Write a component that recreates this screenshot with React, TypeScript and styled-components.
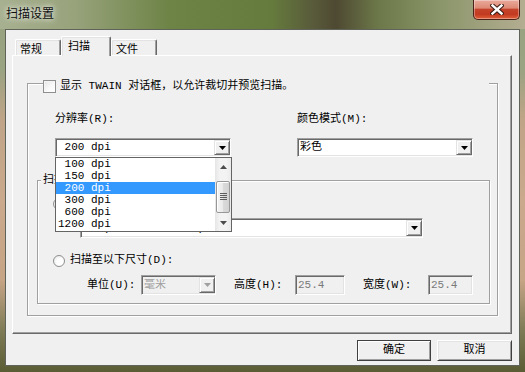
import React from "react";
import styled, { createGlobalStyle } from "styled-components";

const GlobalStyle = createGlobalStyle`
  html, body {
    margin: 0;
    padding: 0;
  }
  body {
    width: 525px;
    height: 372px;
    overflow: hidden;
    font-family: "Liberation Mono", "Noto Sans CJK SC", monospace;
    font-size: 11px;
    color: #000;
  }
  * {
    box-sizing: border-box;
  }
`;

// non-breaking space keeps the 3-digit values lined up under "1200"
const NB = "\u00a0";
const RESOLUTIONS = [`${NB}100 dpi`, `${NB}150 dpi`, `${NB}200 dpi`, `${NB}300 dpi`, `${NB}600 dpi`, "1200 dpi"];
const CURRENT = `${NB}200 dpi`;

const Arrow = ({ up, color = "#000" }: { up?: boolean; color?: string }) => (
  <svg width="7" height="4" viewBox="0 0 7 4">
    <path d={up ? "M0 4 L3.5 0 L7 4 Z" : "M0 0 L7 0 L3.5 4 Z"} fill={color} />
  </svg>
);

export default function App() {
  return (
    <>
      <GlobalStyle />
      <Window>
        <TitleBar>
          <Title>扫描设置</Title>
          <CloseButton>
            <svg width="14" height="11" viewBox="0 0 14 11">
              <path d="M2.5 1.5 L11.5 9.5 M11.5 1.5 L2.5 9.5" stroke="#3b1c14" strokeWidth="4.5" strokeLinecap="square" />
              <path d="M2.5 1.5 L11.5 9.5 M11.5 1.5 L2.5 9.5" stroke="#fff" strokeWidth="2.4" strokeLinecap="square" />
            </svg>
          </CloseButton>
        </TitleBar>

        <Client>
          <TabRow>
            <Tab $width={46}>常规</Tab>
            <Tab $width={50} $active>扫描</Tab>
            <Tab $width={46}>文件</Tab>
          </TabRow>

          <Panel>
            <GroupBox $width={471}>
              <Caption $offset={15} $top={-4} $width={446}>
                <CheckBox />
                <span>显示 TWAIN 对话框，以允许裁切并预览扫描。</span>
              </Caption>
              <GroupBody $pad="20px 7px 11px 9px">
                <ColumnsRow>
                  <Column>
                    <Label>分辨率(R):</Label>
                    <Combo $width={176} $height={19}>
                      <ComboText>{CURRENT}</ComboText>
                      <DropButton $size={15}>
                        <Arrow />
                      </DropButton>
                      <DropList>
                        <ListItems>
                          {RESOLUTIONS.map((r) => (
                            <ListItem key={r} $selected={r === CURRENT}>
                              {r}
                            </ListItem>
                          ))}
                        </ListItems>
                        <ScrollBar>
                          <ArrowCell>
                            <Arrow up color="#4d4d4d" />
                          </ArrowCell>
                          <Track>
                            <Thumb>
                              <svg width="7" height="8" viewBox="0 0 7 8">
                                {[0, 2, 4, 6].map((y) => (
                                  <rect key={y} x="0" y={y} width="7" height="1" fill="#5c5c5c" />
                                ))}
                              </svg>
                            </Thumb>
                          </Track>
                          <ArrowCell>
                            <Arrow color="#4d4d4d" />
                          </ArrowCell>
                        </ScrollBar>
                      </DropList>
                    </Combo>
                  </Column>
                  <Column>
                    <Label>颜色模式(M):</Label>
                    <Combo $width={176} $height={19}>
                      <ComboText>彩色</ComboText>
                      <DropButton $size={15}>
                        <Arrow />
                      </DropButton>
                    </Combo>
                  </Column>
                </ColumnsRow>

                <GroupBox $top={23}>
                  <Caption $offset={3} $top={-7}>
                    扫描区域
                  </Caption>
                  <GroupBody $pad="0 0 8px 0">
                    <RadioRow $top={10}>
                      <Radio />
                      <span>扫描至预定义尺寸(S):</span>
                    </RadioRow>
                    <Indent $left={42} $top={8}>
                      <Combo $width={343} $height={20}>
                        <ComboText>A4 (210 x 297 毫米)</ComboText>
                        <DropButton $size={16}>
                          <Arrow />
                        </DropButton>
                      </Combo>
                    </Indent>
                    <RadioRow $top={16}>
                      <Radio />
                      <span>扫描至以下尺寸(D):</span>
                    </RadioRow>
                    <SizeRow>
                      <SizeLabel $width={54}>单位(U):</SizeLabel>
                      <Combo $width={75} $height={20} $disabled>
                        <ComboText>毫米</ComboText>
                        <DropButton $size={16}>
                          <Arrow color="#a0a0a0" />
                        </DropButton>
                      </Combo>
                      <SizeLabel $width={61} $gap={18}>高度(H):</SizeLabel>
                      <Combo $width={50} $height={20} $disabled $muted>
                        <ComboText>25.4</ComboText>
                      </Combo>
                      <SizeLabel $width={65} $gap={18}>宽度(W):</SizeLabel>
                      <Combo $width={45} $height={20} $disabled $muted>
                        <ComboText>25.4</ComboText>
                      </Combo>
                    </SizeRow>
                  </GroupBody>
                </GroupBox>
              </GroupBody>
            </GroupBox>
          </Panel>

          <ButtonRow>
            <Button $width={74} $default>确定</Button>
            <Button $width={75}>取消</Button>
          </ButtonRow>
        </Client>
      </Window>
    </>
  );
}

const Window = styled.div`
  width: 525px;
  height: 372px;
  display: flex;
  flex-direction: column;
  background: linear-gradient(
    to bottom,
    #97a27f 0px,
    #9aa382 70px,
    #c0a487 120px,
    #caa98c 200px,
    #c6a486 280px,
    #7e7b56 330px,
    #5a5c34 372px
  );
`;

const TitleBar = styled.div`
  height: 29px;
  flex: none;
  display: flex;
  align-items: flex-start;
  justify-content: space-between;
  background: linear-gradient(
    to right,
    #a7b090 0%,
    #98a37c 14%,
    #6e8447 32%,
    #657a3d 52%,
    #58593a 60%,
    #4e4932 64%,
    #6c7849 72%,
    #8b966a 84%,
    #b3ad91 100%
  );
`;

const Title = styled.span`
  font-family: "Noto Sans CJK SC", sans-serif;
  font-size: 12px;
  line-height: 14px;
  margin: 6px 0 0 6px;
  color: #101010;
  text-shadow: 0 0 5px rgba(255, 255, 255, 0.9), 0 0 10px rgba(255, 255, 255, 0.6);
`;

const CloseButton = styled.div`
  width: 47px;
  height: 20px;
  margin-right: 5px;
  border: 1px solid #4a2218;
  border-top: none;
  border-radius: 0 0 5px 5px;
  background: linear-gradient(
    to bottom,
    #e9aa9c 0%,
    #dd8a76 42%,
    #c4432a 50%,
    #c23a20 75%,
    #e0603a 100%
  );
  box-shadow: inset 0 0 0 1px rgba(255, 255, 255, 0.35);
  display: flex;
  align-items: center;
  justify-content: center;
`;

const Client = styled.div`
  margin: 0 5px;
  height: 337px;
  flex: none;
  background: #f0f0f0;
  border: 1px solid #5f6359;
  display: flex;
  flex-direction: column;
  padding: 6px 7px 0 6px;
`;

const TabRow = styled.div`
  display: flex;
  align-items: flex-end;
  height: 19px;
  padding-left: 3px;
  position: relative;
  z-index: 1;
`;

const Tab = styled.div<{ $active?: boolean; $width: number }>`
  width: ${(p) => p.$width}px;
  height: ${(p) => (p.$active ? 20 : 16)}px;
  margin-bottom: ${(p) => (p.$active ? -1 : 0)}px;
  padding: ${(p) => (p.$active ? "2px 0 0 6px" : "2px 0 0 4px")};
  background: #f0f0f0;
  border-top: 1px solid #fff;
  border-left: 1px solid #fff;
  border-right: 1px solid #696969;
  border-radius: 2px 2px 0 0;
  box-shadow: inset -1px 0 #a0a0a0, inset 1px 1px #e3e3e3;
  font-family: "Noto Sans CJK SC", sans-serif;
  font-size: 11px;
  line-height: 13px;
`;

const Panel = styled.div`
  height: 279px;
  border: 1px solid;
  border-color: #fff #696969 #696969 #fff;
  box-shadow: inset -1px -1px #a0a0a0;
  padding: 27px 0 0 14px;
`;

const GroupBox = styled.div<{ $width?: number; $top?: number }>`
  display: flex;
  flex-direction: column;
  ${(p) => (p.$width ? `width: ${p.$width}px;` : "")}
  margin-top: ${(p) => p.$top ?? 0}px;
  border: 1px solid #a0a0a0;
  box-shadow: 1px 1px 0 #fff, inset 1px 1px 0 #fff;
`;

const Caption = styled.div<{ $offset: number; $top: number; $width?: number }>`
  align-self: flex-start;
  display: flex;
  align-items: center;
  gap: 4px;
  height: 13px;
  line-height: 13px;
  margin: ${(p) => p.$top}px 0 0 ${(p) => p.$offset}px;
  padding: 0 2px 0 ${(p) => (p.$width ? 0 : 2)}px;
  ${(p) => (p.$width ? `width: ${p.$width}px;` : "")}
  background: #f0f0f0;
  white-space: pre;
`;

const CheckBox = styled.span`
  width: 13px;
  height: 13px;
  flex: none;
  border: 1px solid #8f8f8f;
  background: linear-gradient(135deg, #e4e4e4 0%, #fafafa 60%, #fff 100%);
  box-shadow: inset 1px 1px #f4f4f4;
`;

const GroupBody = styled.div<{ $pad: string }>`
  display: flex;
  flex-direction: column;
  padding: ${(p) => p.$pad};
`;

const ColumnsRow = styled.div`
  display: flex;
  gap: 66px;
  margin-left: 18px;
`;

const Column = styled.div`
  display: flex;
  flex-direction: column;
  gap: 12px;
`;

const Label = styled.div`
  height: 13px;
  line-height: 13px;
  white-space: pre;
`;

const Combo = styled.div<{
  $width: number;
  $height: number;
  $disabled?: boolean;
  $muted?: boolean;
}>`
  position: relative;
  width: ${(p) => p.$width}px;
  height: ${(p) => p.$height}px;
  flex: none;
  display: flex;
  align-items: center;
  padding: 0 0 0 2px;
  background: ${(p) => (p.$disabled ? "#f0f0f0" : "#fff")};
  color: ${(p) => (p.$muted ? "#7a7a7a" : p.$disabled ? "#a0a0a0" : "#000")};
  border: 1px solid;
  border-color: #a0a0a0 #fff #fff #a0a0a0;
  box-shadow: inset 1px 1px #696969, inset -1px -1px #e3e3e3;
`;

const ComboText = styled.span`
  flex: 1;
  line-height: 13px;
  white-space: pre;
  overflow: hidden;
`;

const DropButton = styled.span<{ $size: number }>`
  width: 16px;
  height: ${(p) => p.$size}px;
  flex: none;
  display: flex;
  align-items: center;
  justify-content: center;
  background: #f0f0f0;
  border: 1px solid;
  border-color: #e3e3e3 #696969 #696969 #e3e3e3;
  box-shadow: inset 1px 1px #fff, inset -1px -1px #a0a0a0;
`;

const DropList = styled.div`
  position: absolute;
  top: 18px;
  left: -1px;
  width: 177px;
  height: 75px;
  z-index: 5;
  display: flex;
  background: #fff;
  border: 1px solid #646464;
  color: #000;
`;

const ListItems = styled.div`
  flex: 1;
  display: flex;
  flex-direction: column;
`;

const ListItem = styled.div<{ $selected?: boolean }>`
  height: 12px;
  line-height: 12px;
  padding-left: 2px;
  white-space: pre;
  background: ${(p) => (p.$selected ? "#3399ff" : "transparent")};
  color: ${(p) => (p.$selected ? "#fff" : "#000")};
`;

const ScrollBar = styled.div`
  width: 16px;
  display: flex;
  flex-direction: column;
  background: linear-gradient(to right, #e6e6e6, #f3f3f3 30%, #f3f3f3 70%, #ebebeb);
`;

const ArrowCell = styled.div`
  height: 17px;
  display: flex;
  align-items: center;
  justify-content: center;
`;

const Track = styled.div`
  flex: 1;
  padding: 6px 1px 0;
`;

const Thumb = styled.div`
  height: 32px;
  display: flex;
  align-items: center;
  justify-content: center;
  border: 1px solid #979797;
  border-radius: 2px;
  background: linear-gradient(to right, #f4f4f4, #e9e9e9 50%, #dadada 51%, #d2d2d2);
  box-shadow: inset 1px 1px #fff;
`;

const RadioRow = styled.div<{ $top: number }>`
  display: flex;
  align-items: center;
  gap: 5px;
  height: 13px;
  line-height: 13px;
  margin: ${(p) => p.$top}px 0 0 15px;
  white-space: pre;
`;

const Radio = styled.span`
  width: 12px;
  height: 12px;
  flex: none;
  border-radius: 50%;
  border: 1px solid #8e8f8f;
  background: radial-gradient(circle at 60% 60%, #fff 35%, #e2e2e2 100%);
`;

const Indent = styled.div<{ $left: number; $top: number }>`
  display: flex;
  margin: ${(p) => p.$top}px 0 0 ${(p) => p.$left}px;
`;

const SizeRow = styled.div`
  display: flex;
  align-items: center;
  height: 20px;
  margin: 8px 0 0 49px;
`;

const SizeLabel = styled.span<{ $width: number; $gap?: number }>`
  width: ${(p) => p.$width}px;
  margin-left: ${(p) => p.$gap ?? 0}px;
  flex: none;
  line-height: 13px;
  white-space: pre;
`;

const ButtonRow = styled.div`
  display: flex;
  justify-content: flex-end;
  gap: 6px;
  margin-top: 6px;
`;

const Button = styled.div<{ $width: number; $default?: boolean }>`
  width: ${(p) => p.$width}px;
  height: 21px;
  display: flex;
  align-items: center;
  justify-content: center;
  line-height: 13px;
  background: #f0f0f0;
  border: 1px solid;
  border-color: ${(p) => (p.$default ? "#404040" : "#fff #404040 #404040 #fff")};
  box-shadow: ${(p) =>
    p.$default
      ? "inset 1px 1px #fff, inset -1px -1px #a0a0a0"
      : "inset 1px 1px #e3e3e3, inset -1px -1px #a0a0a0"};
`;
